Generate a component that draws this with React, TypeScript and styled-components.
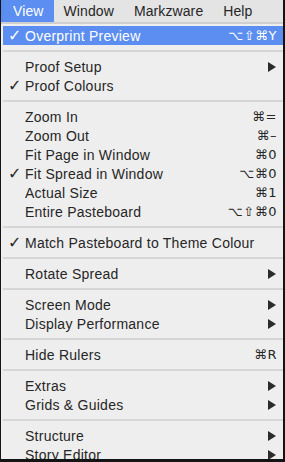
import React from "react";
import styled, { createGlobalStyle } from "styled-components";

const Global = createGlobalStyle`
  html, body { margin: 0; padding: 0; background: #111; }
  body { font-family: "Liberation Sans", Arial, Helvetica, sans-serif; }
`;

const Frame = styled.div`
  width: 285px;
  height: 462px;
  box-sizing: border-box;
  border-style: solid;
  border-color: #141414;
  border-width: 0 2px 3px 1px;
  background: #eeeeee;
  overflow: hidden;
  display: flex;
  flex-direction: column;
  color: #262626;
  font-size: 14px;
`;

const MenuBar = styled.div`
  height: 22px;
  flex: none;
  display: flex;
  align-items: stretch;
  background: #e4e4e4;
`;

const BarItem = styled.div<{ $active?: boolean; $first?: boolean }>`
  display: flex;
  align-items: center;
  padding: 0 10px 0 ${(p) => (p.$first ? "12px" : "10px")};
  background: ${(p) => (p.$active ? "#5b8ef0" : "transparent")};
  color: ${(p) => (p.$active ? "#ffffff" : "#262626")};
  font-size: 14px;
  letter-spacing: 0.1px;
`;

const Menu = styled.div`
  flex: 1;
  display: flex;
  flex-direction: column;
  border-top: 2px solid #cfcfcf;
  padding: 2px 0 0 2px;
  background: #eeeeee;
`;

const Row = styled.div<{ $active?: boolean }>`
  height: 19px;
  flex: none;
  display: grid;
  grid-template-columns: 22px 1fr auto;
  align-items: center;
  padding-right: 6px;
  background: ${(p) => (p.$active ? "#5b8ef0" : "transparent")};
  color: ${(p) => (p.$active ? "#ffffff" : "#262626")};
  letter-spacing: 0.25px;
`;

const Check = styled.span`
  padding-left: 5px;
  font-family: "DejaVu Sans", sans-serif;
  font-size: 16px;
  line-height: 19px;
`;

const Label = styled.span`
  white-space: nowrap;
`;

const Shortcut = styled.span`
  font-family: "DejaVu Sans", sans-serif;
  font-size: 13px;
  letter-spacing: 0.5px;
  text-align: right;
`;

const Arrow = styled.span`
  width: 0;
  height: 0;
  margin-right: 1px;
  border-top: 5px solid transparent;
  border-bottom: 5px solid transparent;
  border-left: 8px solid #2b2b2b;
`;

const Sep = styled.div`
  height: 12px;
  flex: none;
  display: flex;
  align-items: center;
  &::after {
    content: "";
    flex: 1;
    height: 2px;
    background: #d6d6d6;
  }
`;

type Item =
  | { sep: true }
  | { label: string; check?: boolean; sc?: string; sub?: boolean; active?: boolean };

const items: Item[] = [
  { label: "Overprint Preview", check: true, sc: "⌥⇧⌘Y", active: true },
  { sep: true },
  { label: "Proof Setup", sub: true },
  { label: "Proof Colours", check: true },
  { sep: true },
  { label: "Zoom In", sc: "⌘=" },
  { label: "Zoom Out", sc: "⌘–" },
  { label: "Fit Page in Window", sc: "⌘0" },
  { label: "Fit Spread in Window", check: true, sc: "⌥⌘0" },
  { label: "Actual Size", sc: "⌘1" },
  { label: "Entire Pasteboard", sc: "⌥⇧⌘0" },
  { sep: true },
  { label: "Match Pasteboard to Theme Colour", check: true },
  { sep: true },
  { label: "Rotate Spread", sub: true },
  { sep: true },
  { label: "Screen Mode", sub: true },
  { label: "Display Performance", sub: true },
  { sep: true },
  { label: "Hide Rulers", sc: "⌘R" },
  { sep: true },
  { label: "Extras", sub: true },
  { label: "Grids & Guides", sub: true },
  { sep: true },
  { label: "Structure", sub: true },
  { label: "Story Editor", sub: true },
];

export default function App() {
  return (
    <>
      <Global />
      <Frame>
        <MenuBar>
          <BarItem $active $first>View</BarItem>
          <BarItem>Window</BarItem>
          <BarItem>Markzware</BarItem>
          <BarItem>Help</BarItem>
        </MenuBar>
        <Menu>
          {items.map((it, i) =>
            "sep" in it ? (
              <Sep key={i} />
            ) : (
              <Row key={i} $active={it.active}>
                <Check>{it.check ? "✓" : ""}</Check>
                <Label>{it.label}</Label>
                {it.sub ? <Arrow /> : <Shortcut>{it.sc ?? ""}</Shortcut>}
              </Row>
            )
          )}
        </Menu>
      </Frame>
    </>
  );
}
